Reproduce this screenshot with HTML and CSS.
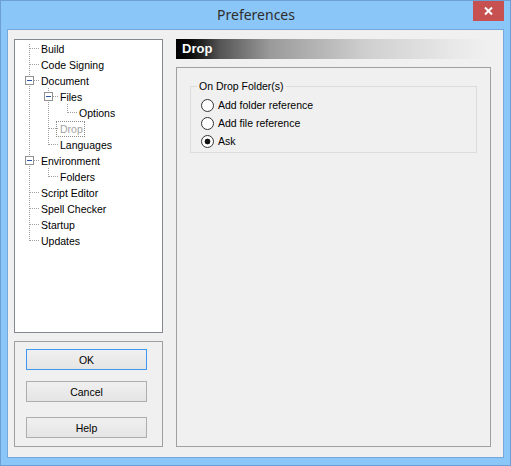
FILE: index.html
```
<!DOCTYPE html>
<html>
<head>
<meta charset="utf-8">
<title>Preferences</title>
<link rel="stylesheet" href="styles.css">
</head>
<body>
<div class="window">
  <div class="titlebar">
    <span class="spacer"></span>
    <div class="title">Preferences</div>
    <div class="close">
      <svg width="31" height="20" viewBox="0 0 31 20"><path d="M12 6.5 L19 13.5 M19 6.5 L12 13.5" stroke="#fff" stroke-width="2" fill="none"/></svg>
    </div>
  </div>
  <div class="client">
    <div class="left">
      <div class="tree">
        <div class="row"><span class="c first"></span><span class="lbl">Build</span></div>
        <div class="row"><span class="c"></span><span class="lbl">Code Signing</span></div>
        <div class="row"><span class="c"><i class="exp"></i></span><span class="lbl">Document</span></div>
        <div class="row"><span class="g"></span><span class="c"><i class="exp"></i></span><span class="lbl">Files</span></div>
        <div class="row"><span class="g"></span><span class="g"></span><span class="c last"></span><span class="lbl">Options</span></div>
        <div class="row"><span class="g"></span><span class="c"></span><span class="lbl sel">Drop</span></div>
        <div class="row"><span class="g"></span><span class="c last"></span><span class="lbl">Languages</span></div>
        <div class="row"><span class="c"><i class="exp"></i></span><span class="lbl">Environment</span></div>
        <div class="row"><span class="g"></span><span class="c last"></span><span class="lbl">Folders</span></div>
        <div class="row"><span class="c"></span><span class="lbl">Script Editor</span></div>
        <div class="row"><span class="c"></span><span class="lbl">Spell Checker</span></div>
        <div class="row"><span class="c"></span><span class="lbl">Startup</span></div>
        <div class="row"><span class="c last"></span><span class="lbl">Updates</span></div>
      </div>
      <div class="buttons">
        <button class="btn default">OK</button>
        <button class="btn cancel">Cancel</button>
        <button class="btn help">Help</button>
      </div>
    </div>
    <div class="right">
      <div class="header">Drop</div>
      <div class="page">
        <fieldset class="group">
          <legend>On Drop Folder(s)</legend>
          <div class="radio"><span class="dot"></span><span>Add folder reference</span></div>
          <div class="radio"><span class="dot"></span><span>Add file reference</span></div>
          <div class="radio"><span class="dot on"></span><span>Ask</span></div>
        </fieldset>
      </div>
    </div>
  </div>
</div>
</body>
</html>
```
FILE: styles.css
```
html, body {
  margin: 0;
  padding: 0;
  background: #ffffff;
}

.window {
  width: 511px;
  height: 466px;
  box-sizing: border-box;
  border: 1px solid #6e9fd2;
  background: #8bc6f8;
  font-family: "Liberation Sans", Arial, sans-serif;
  font-size: 10.5px;
  color: #000;
}

.titlebar {
  height: 28px;
  display: grid;
  grid-template-columns: 1fr auto 1fr;
  align-items: center;
}

.title {
  font-family: "Noto Sans", "Open Sans", sans-serif;
  font-size: 14px;
  color: #2e2e2e;
  line-height: 28px;
  padding-left: 1px;
}

.close {
  justify-self: end;
  align-self: start;
  width: 31px;
  height: 20px;
  margin-right: 6px;
  background: #c75050;
}

.close svg {
  display: block;
}

.client {
  margin-left: 6px;
  width: 497px;
  height: 429px;
  box-sizing: border-box;
  border: 1px solid #74a8da;
  background: #f0f0f0;
  padding: 9px 12px 10px 6px;
  display: grid;
  grid-template-columns: 149px 315px;
  column-gap: 13px;
}

.left {
  display: flex;
  flex-direction: column;
  gap: 8px;
}

.tree {
  height: 294px;
  box-sizing: border-box;
  border: 1px solid #828790;
  background: #fff;
  padding-left: 5px;
}

.row {
  display: flex;
  height: 16px;
  align-items: flex-start;
}

.c, .g {
  flex: none;
  width: 19px;
  height: 16px;
}

.g {
  background: repeating-linear-gradient(to bottom, #a0a0a0 0 1px, transparent 1px 2px) 9px 0 / 1px 16px no-repeat;
}

.c {
  background:
    repeating-linear-gradient(to bottom, #a0a0a0 0 1px, transparent 1px 2px) 9px 0 / 1px 16px no-repeat,
    repeating-linear-gradient(to right, #a0a0a0 0 1px, transparent 1px 2px) 10px 8px / 9px 1px no-repeat;
}

.c.last {
  background:
    repeating-linear-gradient(to bottom, #a0a0a0 0 1px, transparent 1px 2px) 9px 0 / 1px 9px no-repeat,
    repeating-linear-gradient(to right, #a0a0a0 0 1px, transparent 1px 2px) 10px 8px / 9px 1px no-repeat;
}

.c.first {
  background:
    repeating-linear-gradient(to bottom, #a0a0a0 0 1px, transparent 1px 2px) 9px 4px / 1px 12px no-repeat,
    repeating-linear-gradient(to right, #a0a0a0 0 1px, transparent 1px 2px) 10px 8px / 9px 1px no-repeat;
}

.exp {
  display: block;
  width: 9px;
  height: 9px;
  box-sizing: border-box;
  margin: 4px 0 0 5px;
  border: 1px solid #919191;
  background: linear-gradient(#2d55a6, #2d55a6) center / 5px 1px no-repeat, #fff;
}

.lbl {
  margin-top: 1px;
  line-height: 14px;
  border: 1px solid transparent;
  padding: 0 1px;
  white-space: nowrap;
}

.lbl.sel {
  color: #a3a3a3;
  border: 1px dotted #8a8a8a;
  margin-left: -2px;
  padding-left: 3px;
}

.buttons {
  height: 106px;
  box-sizing: border-box;
  border: 1px solid #a0a0a0;
  padding: 7px 0 0 11px;
}

.btn {
  display: block;
  width: 121px;
  height: 21px;
  margin: 0;
  padding: 0;
  box-sizing: border-box;
  border: 1px solid #adadad;
  background: linear-gradient(#f0f0f0, #e5e5e5);
  font-family: "Liberation Sans", Arial, sans-serif;
  font-size: 10.5px;
  color: #000;
}

.btn.default {
  border-color: #3c99ee;
}

.btn.cancel {
  margin-top: 11px;
}

.btn.help {
  margin-top: 15px;
}

.right {
  display: flex;
  flex-direction: column;
  gap: 8px;
}

.header {
  height: 20px;
  line-height: 20px;
  padding-left: 6px;
  color: #fff;
  font-weight: bold;
  font-size: 13px;
  background: linear-gradient(to right, #000 0px, #0a0a0a 14px, #262626 27px, #555 44px, #9a9a9a 94px, #cfcfcf 190px, #e9e9e9 280px, #f0f0f0 314px);
}

.page {
  height: 380px;
  box-sizing: border-box;
  border: 1px solid #a0a0a0;
  padding: 12px 13px 0 13px;
}

.group {
  margin: 0;
  border: 1px solid #dcdcdc;
  padding: 3px 0 2px 10px;
}

.group legend {
  margin-left: -4px;
  padding: 0 2px;
  line-height: 13px;
}

.radio {
  display: flex;
  align-items: center;
  height: 18px;
  gap: 4px;
  white-space: nowrap;
}

.dot {
  flex: none;
  width: 13px;
  height: 13px;
  box-sizing: border-box;
  border: 1px solid #333;
  border-radius: 50%;
  background: #fff;
}

.dot.on {
  background: radial-gradient(circle, #111 0 2.6px, #fff 3.2px);
}
```
